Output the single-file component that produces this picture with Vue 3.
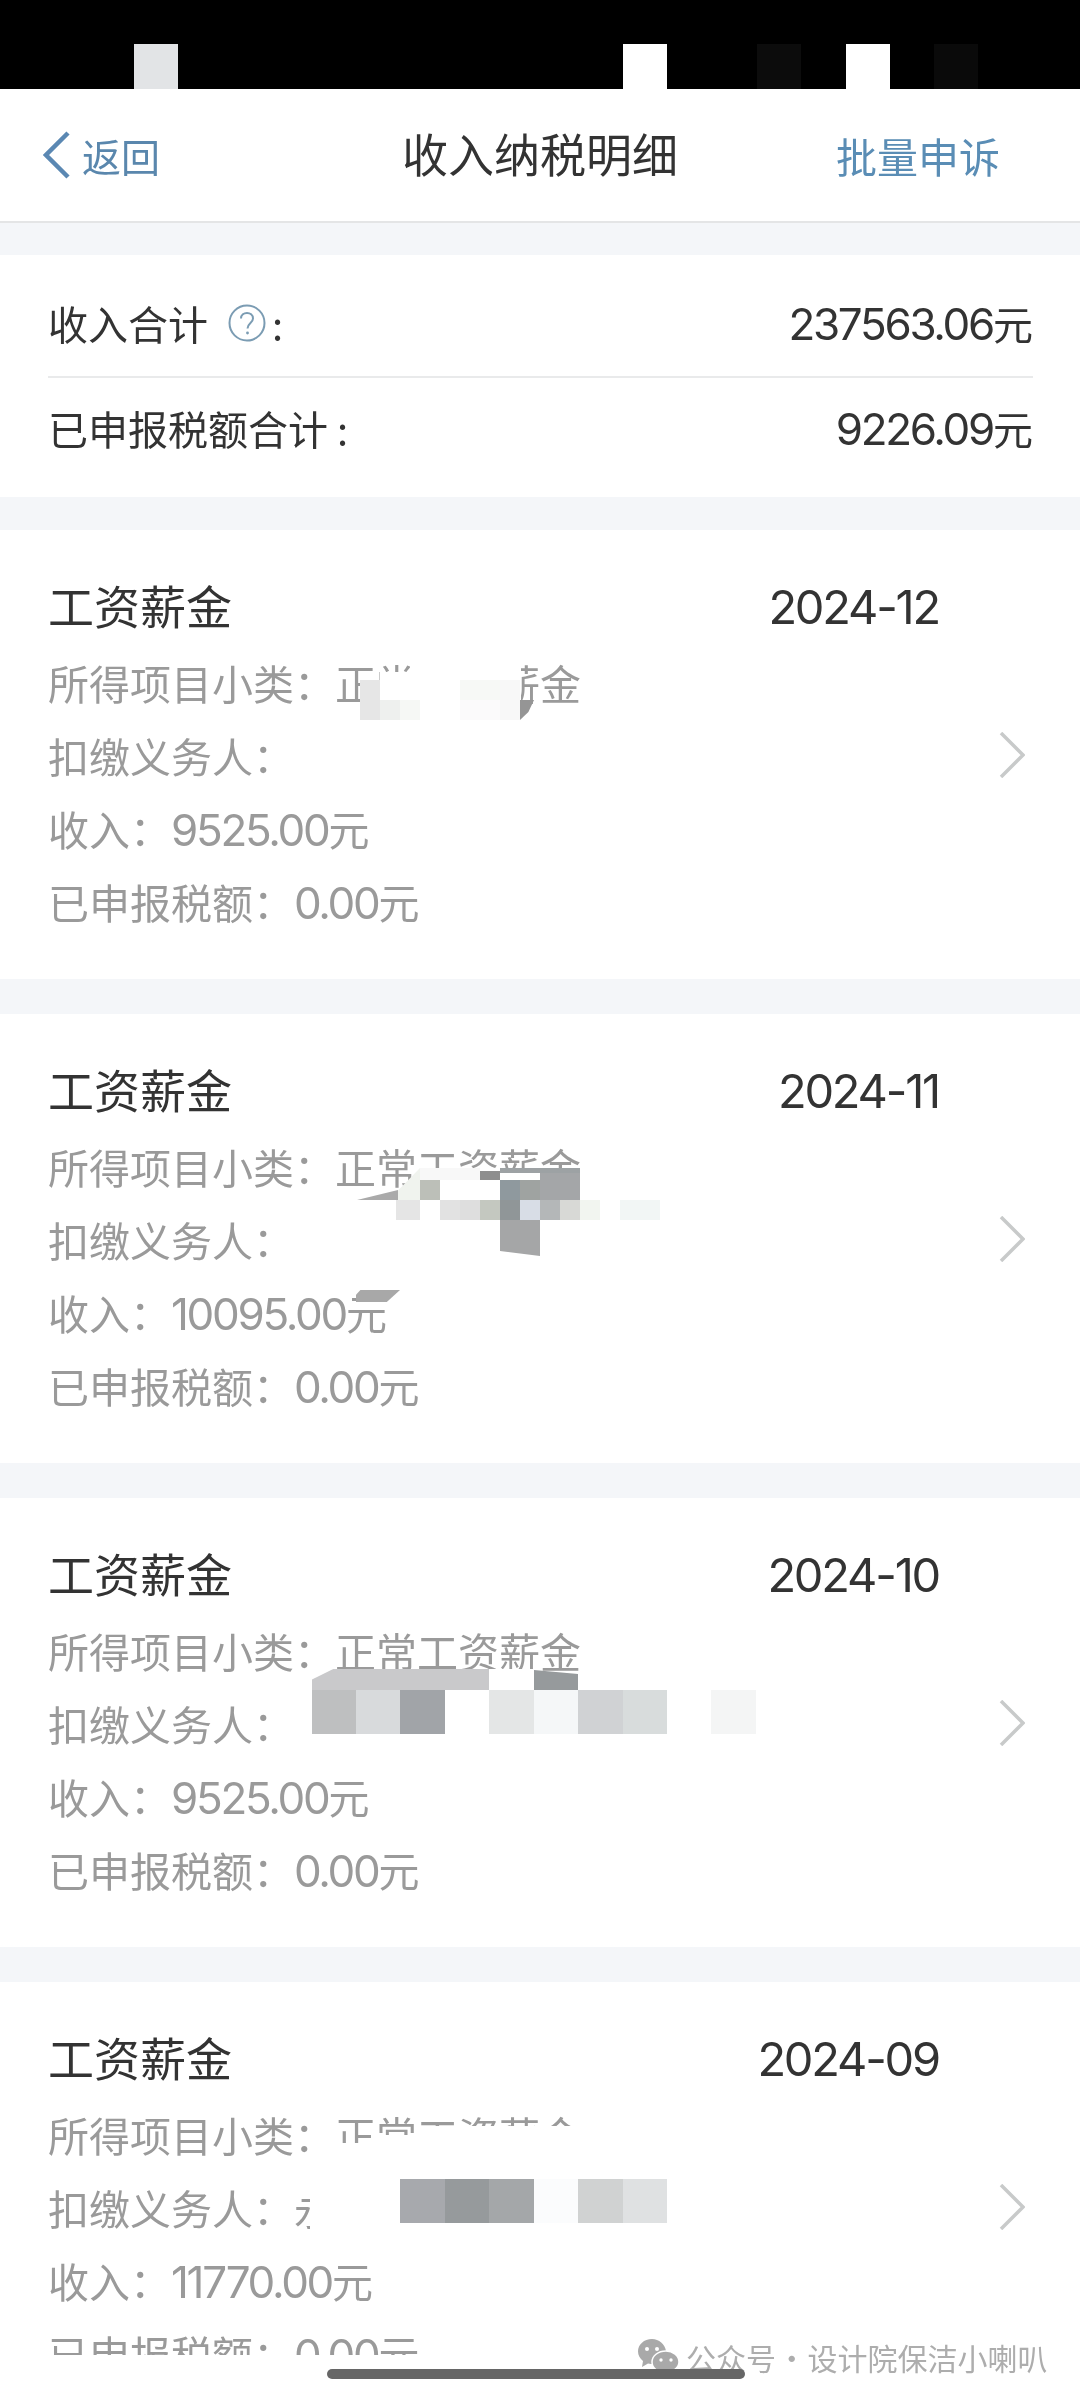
<script setup>
const records = [
  { date: '2024-12', income: '9525.00', payer: '' },
  { date: '2024-11', income: '10095.00', payer: '' },
  { date: '2024-10', income: '9525.00', payer: '' },
  { date: '2024-09', income: '11770.00', payer: '永' }
]

const W = '#ffffff'
const rawTiles = [
  // first record
  [360, 680, 20, 40, '#e6e6e6'], [380, 672, 30, 28, W], [380, 700, 20, 20, '#eef0ee'], [400, 700, 20, 20, '#f6f8f5'],
  [410, 655, 111, 45, W], [420, 700, 40, 20, W], [460, 680, 40, 20, '#f7f9f6'], [460, 700, 40, 20, '#fbfafb'],
  [500, 680, 20, 40, '#f8f8f8'], [520, 700, 14, 20, '#959595', 'polygon(0 0,100% 0,60% 60%,0 100%)'],
  // second record
  [398, 1168, 22, 32, '#f0f3ee', 'polygon(100% 0,100% 100%,0 100%,0 70%)'],
  [357, 1190, 41, 10, '#aaaaaa', 'polygon(0 100%,100% 0,100% 100%)'],
  [420, 1168, 60, 12, '#f8f8f8'], [480, 1168, 20, 3, W], [480, 1171, 20, 9, '#8e8e8e'],
  [500, 1168, 80, 5, '#9da2a4'], [500, 1173, 40, 7, W], [540, 1173, 40, 7, '#a4a6a8'],
  [420, 1180, 20, 20, '#bcbfb8'], [440, 1180, 60, 20, W],
  [500, 1180, 20, 20, '#8f999e'], [520, 1180, 20, 20, '#9fa3a1'], [540, 1180, 40, 20, '#a4a6a8'],
  [396, 1200, 24, 20, '#e5e5e5'], [420, 1200, 20, 20, W], [440, 1200, 20, 20, '#e2e2e2'], [460, 1200, 20, 20, '#dedede'],
  [480, 1200, 20, 20, '#c4c8c0'], [500, 1200, 20, 20, '#909698'], [520, 1200, 20, 20, '#d8dde6'],
  [540, 1200, 20, 20, '#b4b7b8'], [560, 1200, 20, 20, '#d8d9d6'], [580, 1200, 20, 20, '#f2f5f0'], [620, 1200, 40, 20, '#f2f6f5'],
  [500, 1220, 40, 36, '#a5a6a7', 'polygon(0 0,100% 0,100% 100%,0 86%)'],
  [356, 1290, 44, 12, '#a8a8a8', 'polygon(10% 0,100% 0,70% 100%,0 100%,0 40%)'],
  // third record
  [312, 1669, 177, 21, '#c9c9cb', 'polygon(12% 0,100% 0,100% 100%,0 100%,0 50%)'],
  [489, 1669, 45, 21, W], [534, 1670, 44, 20, '#969a9c', 'polygon(0 0,100% 20%,100% 100%,0 100%)'],
  [312, 1690, 44, 44, '#bebfc0'], [356, 1690, 44, 44, '#d8dadc'], [400, 1690, 45, 44, '#a1a4a8'], [445, 1690, 44, 44, W],
  [489, 1690, 45, 44, '#e4e6e6'], [534, 1690, 44, 44, '#f5f7f8'], [578, 1690, 45, 44, '#d0d2d4'], [623, 1690, 44, 44, '#d8dcdc'],
  [711, 1690, 45, 44, '#f4f5f5'],
  // fourth record
  [335, 2143, 50, 37, W], [376, 2135, 44, 45, W], [420, 2126, 170, 54, W],
  [296, 2175, 14, 24, W], [310, 2175, 90, 60, W],
  [400, 2179, 45, 44, '#a7a9ad'], [445, 2179, 44, 44, '#969a9c'], [489, 2179, 45, 44, '#a4a7a9'],
  [534, 2179, 44, 44, '#fbfcfd'], [578, 2179, 45, 44, '#d0d2d2'], [623, 2179, 44, 44, '#dfe1e2']
]

const tiles = rawTiles.map(([x, y, w, h, color, clip]) => ({
  left: x + 'px',
  top: y + 'px',
  width: w + 'px',
  height: h + 'px',
  background: color,
  clipPath: clip || 'none'
}))
</script>

<template>
  <div class="page">
    <div class="status">
      <i class="seg seg-a"></i>
      <i class="seg seg-b"></i>
      <i class="seg seg-c"></i>
      <i class="seg seg-d"></i>
      <i class="seg seg-e"></i>
    </div>

    <header class="nav">
      <div class="back">
        <svg class="back-icon" width="28" height="48" viewBox="0 0 28 48">
          <path d="M25 2 L3 24 L25 46" fill="none" stroke="#5b88b3" stroke-width="4.5" />
        </svg>
        <span>返回</span>
      </div>
      <h1 class="title">收入纳税明细</h1>
      <div class="batch">批量申诉</div>
    </header>

    <section class="summary">
      <div class="sum-row first">
        <span class="sum-label">
          收入合计
          <svg class="help" width="38" height="38" viewBox="0 0 38 38">
            <circle cx="19" cy="19" r="17.5" fill="none" stroke="#7b9cb3" stroke-width="2" />
            <path d="M13 14.5 C13 7 25 7 25 14.5 C25 19 19.5 19 19.500 24.500" fill="none" stroke="#7b9cb3" stroke-width="2" />
            <circle cx="19.500" cy="29" r="1.400" fill="#7b9cb3" />
          </svg>:
        </span>
        <span><span class="num">237563.06</span>元</span>
      </div>
      <div class="sum-row second">
        <span>已申报税额合计 :</span>
        <span><span class="num">9226.09</span>元</span>
      </div>
    </section>

    <section v-for="item in records" :key="item.date" class="card">
      <div class="card-inner">
        <div class="card-main">
          <div class="card-head">
            <span>工资薪金</span>
            <span class="date">{{ item.date }}</span>
          </div>
          <div class="row">所得项目小类：正常工资薪金</div>
          <div class="row">扣缴义务人：{{ item.payer }}</div>
          <div class="row">收入：<span class="num">{{ item.income }}</span>元</div>
          <div class="row">已申报税额：<span class="num">0.00</span>元</div>
        </div>
        <svg class="more" width="26" height="46" viewBox="0 0 26 46">
          <path d="M2 1 L24 23 L2 45" fill="none" stroke="#c8caca" stroke-width="3.5" />
        </svg>
      </div>
    </section>

    <footer class="foot">
      <div class="mark">
        <svg width="44" height="38" viewBox="0 0 44 38">
          <path d="M15 1 C7 1 1 6.500 1 13.500 C1 17.500 3 20.500 6 23 L5 29 L11 25.500 C13 26 15 26 17 26 C27 26 30 19 29 13 C28 6 22 1 15 1 Z" fill="#a9a9a9" />
          <circle cx="10" cy="11" r="2" fill="#fff" />
          <circle cx="20" cy="11" r="2" fill="#fff" />
          <path d="M29 13 C21 13 15 18 15 24 C15 30 21 35 29 35 C30.500 35 32 35 33 34.500 L38 37 L37 32 C40 30 42 27.500 42 24 C42 18 36 13 29 13 Z" fill="#a9a9a9" stroke="#fff" stroke-width="1.500" />
          <circle cx="24" cy="22" r="1.700" fill="#fff" />
          <circle cx="34" cy="22" r="1.700" fill="#fff" />
        </svg>
        <span>公众号 · 设计院保洁小喇叭</span>
      </div>
      <div class="home"></div>
    </footer>

    <div class="mosaic">
      <i v-for="(t, i) in tiles" :key="i" class="tile" :style="t"></i>
    </div>
  </div>
</template>

<style scoped>
.page {
  position: relative;
  width: 1080px;
  height: 2400px;
  overflow: hidden;
  background: #f4f6f9;
  color: #333333;
  font-family: "Noto Sans CJK SC", "Liberation Sans", sans-serif;
  filter: blur(0.5px);
}
.num {
  font-family: "Inter", "Liberation Sans", sans-serif;
  font-size: 44px;
  letter-spacing: -2.3px;
}
.date {
  font-family: "Inter", "Liberation Sans", sans-serif;
  font-size: 47px;
  letter-spacing: -2.2px;
  height: 60px;
  line-height: 65px;
}
.status {
  display: flex;
  align-items: flex-start;
  height: 45px;
  padding-top: 44px;
  background: #000000;
}
.seg {
  display: block;
  width: 44px;
  height: 45px;
}
.seg-a { margin-left: 134px; background: #e2e4e6; }
.seg-b { margin-left: 445px; background: #ffffff; }
.seg-c { margin-left: 90px; background: #0c0c0c; }
.seg-d { margin-left: 45px; background: #ffffff; }
.seg-e { margin-left: 44px; background: #0a0a0a; }

.nav {
  display: grid;
  grid-template-columns: 1fr auto 1fr;
  align-items: center;
  height: 132px;
  background: #ffffff;
  border-bottom: 2px solid #e4e5e6;
}
.back {
  display: flex;
  align-items: center;
  gap: 11px;
  padding-left: 43px;
  font-size: 39px;
  color: #5a87ad;
}
.title {
  margin: -6px 0 0;
  font-size: 46px;
  font-weight: 400;
  line-height: 60px;
  color: #333333;
}
.batch {
  padding-right: 80px;
  text-align: right;
  font-size: 41px;
  color: #5a8db5;
}
.summary {
  margin-top: 32px;
  padding: 31px 47px 33px 48px;
  background: #ffffff;
  font-size: 40px;
}
.sum-row {
  display: flex;
  justify-content: space-between;
  align-items: center;
}
.sum-row.first {
  height: 74px;
  padding-bottom: 16px;
  box-sizing: content-box;
  border-bottom: 2px solid #e9eaeb;
}
.sum-row.second {
  height: 72px;
  margin-top: 14px;
}
.sum-label {
  display: flex;
  align-items: center;
}
.help {
  margin-left: 20px;
  margin-right: 6px;
}
.card {
  height: 449px;
  margin-top: 35px;
  background: #ffffff;
  overflow: hidden;
}
.card:nth-of-type(2) { margin-top: 33px; }
.card:last-of-type { height: 373px; }
.card-inner {
  display: flex;
  align-items: center;
  height: 449px;
  padding: 0 55px 0 48px;
  box-sizing: border-box;
}
.card-main {
  flex: 1;
  margin-right: 60px;
}
.card-head {
  display: flex;
  justify-content: space-between;
  font-size: 46px;
  line-height: 60px;
  margin-bottom: 12px;
  margin-top: 2px;
}
.row {
  height: 73px;
  line-height: 73px;
  font-size: 41px;
  color: #9a9a9a;
  white-space: nowrap;
}
.more { flex: none; }

.foot {
  position: relative;
  height: 45px;
  background: #ffffff;
}
.mark {
  position: absolute;
  top: -18px;
  left: 637px;
  display: flex;
  align-items: center;
  gap: 5px;
  font-size: 30px;
  line-height: 40px;
  word-spacing: -6px;
  color: #adadad;
  white-space: nowrap;
}
.home {
  position: absolute;
  top: 14px;
  left: 327px;
  width: 418px;
  height: 10px;
  border-radius: 5px;
  background: #666666;
}
.mosaic {
  position: absolute;
  inset: 0;
  pointer-events: none;
}
.tile {
  position: absolute;
  display: block;
}
</style>
